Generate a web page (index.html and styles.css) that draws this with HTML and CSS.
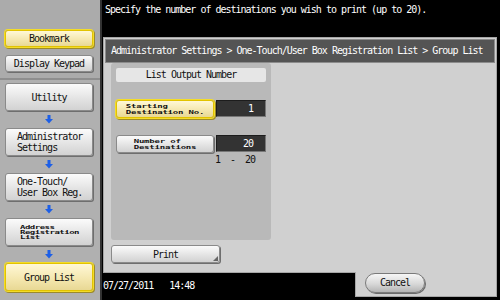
FILE: index.html
```html
<!DOCTYPE html>
<html>
<head>
<meta charset="utf-8">
<link rel="stylesheet" href="styles.css">
</head>
<body>
<aside class="sidebar">
  <div class="side-top">
    <div class="btn btn-yellow side-btn">Bookmark</div>
    <div class="btn side-btn">Display Keypad</div>
  </div>
  <div class="side-flow">
    <div class="btn flow-btn">Utility</div>
    <div class="arrow"><svg width="8" height="9" viewBox="0 0 8 9"><rect x="2.5" y="0" width="3" height="4" fill="#1d5fe6"/><polygon points="0,4 8,4 4,8.5" fill="#1d5fe6"/></svg></div>
    <div class="btn flow-btn flow-left"><span>Administrator<br>Settings</span></div>
    <div class="arrow"><svg width="8" height="9" viewBox="0 0 8 9"><rect x="2.5" y="0" width="3" height="4" fill="#1d5fe6"/><polygon points="0,4 8,4 4,8.5" fill="#1d5fe6"/></svg></div>
    <div class="btn flow-btn flow-left"><span>One-Touch/<br>User Box Reg.</span></div>
    <div class="arrow"><svg width="8" height="9" viewBox="0 0 8 9"><rect x="2.5" y="0" width="3" height="4" fill="#1d5fe6"/><polygon points="0,4 8,4 4,8.5" fill="#1d5fe6"/></svg></div>
    <div class="btn flow-btn flow-left"><span class="tiny">Address<br>Registration<br>List</span></div>
    <div class="arrow"><svg width="8" height="9" viewBox="0 0 8 9"><rect x="2.5" y="0" width="3" height="4" fill="#1d5fe6"/><polygon points="0,4 8,4 4,8.5" fill="#1d5fe6"/></svg></div>
    <div class="btn btn-yellow flow-btn">Group List</div>
  </div>
</aside>
<main class="main">
  <div class="msg">Specify the number of destinations you wish to print (up to 20).</div>
  <section class="panel">
    <div class="panel-head">Administrator Settings &gt; One-Touch/User Box Registration List &gt; Group List</div>
    <div class="panel-body">
      <div class="group">
        <div class="group-title">List Output Number</div>
        <div class="row row-first">
          <div class="btn btn-yellow field-btn"><span class="tiny">Starting<br>Destination No.</span></div>
          <div class="value">1</div>
        </div>
        <div class="row row-second">
          <div class="btn field-btn"><span class="tiny">Number of<br>Destinations</span></div>
          <div class="value">20</div>
        </div>
        <div class="range"><span>1</span><span>-</span><span>20</span></div>
      </div>
      <div class="btn print-btn">Print</div>
    </div>
  </section>
  <div class="footer">
    <div class="clock"><span>07/27/2011</span><span class="time">14:48</span></div>
    <div class="tab"><div class="cancel">Cancel</div></div>
  </div>
</main>
</body>
</html>
```

FILE: styles.css
```css
* { box-sizing: border-box; }
html, body { margin: 0; padding: 0; }
body {
  width: 500px;
  height: 300px;
  overflow: hidden;
  display: flex;
  background: #000;
  font-family: "DejaVu Sans Mono", "Liberation Mono", monospace;
  font-size: 10px;
  letter-spacing: -1px;
  color: #111;
}

.sidebar {
  width: 100px;
  height: 300px;
  display: flex;
  flex-direction: column;
  background: #ababab;
}
.side-top {
  height: 80px;
  padding: 30px 0 0 5px;
  display: flex;
  flex-direction: column;
  gap: 8px;
  border-bottom: 2px solid #8e8e8e;
}
.side-flow {
  flex: 1;
  padding: 3px 0 0 5px;
  display: flex;
  flex-direction: column;
  background: #b0b0b0;
}

.btn {
  display: flex;
  align-items: center;
  justify-content: center;
  background: linear-gradient(#fbfbfb, #e2e2e2 60%, #d2d2d2);
  border: 1px solid #8a8a8a;
  border-radius: 3px;
  box-shadow: 1px 1px 0 #6e6e6e;
  color: #111;
}
.btn-yellow {
  background: linear-gradient(#fff8d6, #f3e6ad 60%, #e8d894);
  border: 1px solid #e2c300;
  box-shadow: 0 0 0 1px #f3dc2a, 1px 1px 0 1px #9c8a2a;
}
.side-btn { width: 88px; height: 17px; }
.flow-btn { width: 88px; height: 28px; line-height: 11px; }
.flow-left { justify-content: flex-start; padding-left: 11px; }
.arrow {
  height: 17px;
  width: 88px;
  display: flex;
  align-items: center;
  justify-content: center;
}
.arrow svg { display: block; }

.tiny {
  font-size: 9px;
  font-weight: bold;
  line-height: 8px;
  letter-spacing: -0.2px;
  display: block;
  transform: scaleY(0.66);
}
.flow-left .tiny { padding-left: 3px; letter-spacing: -0.5px; }

.main {
  flex: 1;
  height: 300px;
  display: flex;
  flex-direction: column;
  border-left: 2px solid #333;
  background: #000;
}
.msg {
  height: 37px;
  padding: 4px 0 0 3px;
  line-height: 11px;
  color: #fff;
}
.panel {
  margin: 0 3px 0 1px;
  padding: 1px 1px 0;
  background: #d0d0d0;
  border: 1px solid #a6a6a6;
  border-bottom: none;
  display: flex;
  flex-direction: column;
}
.panel-head {
  height: 24px;
  background: #545454;
  border: 1px solid #8c8c8c;
  color: #fff;
  padding: 0 0 0 5px;
  line-height: 22px;
}
.panel-body {
  padding: 0 0 9px 6px;
  display: flex;
  flex-direction: column;
  gap: 5px;
}
.group {
  width: 160px;
  height: 177px;
  background: #b9b9b9;
  border-radius: 3px;
  padding: 5px 5px 0;
  display: flex;
  flex-direction: column;
}
.group-title {
  height: 14px;
  background: #e6e6e6;
  border-radius: 2px;
  text-align: center;
  line-height: 14px;
}
.row {
  display: flex;
  gap: 2px;
  height: 18px;
}
.row-first { margin-top: 18px; }
.row-second { margin-top: 17px; }
.field-btn { width: 98px; height: 18px; }
.value {
  width: 50px;
  height: 17px;
  background: #333;
  border: 1px solid #1c1c1c;
  border-right-color: #777;
  border-bottom-color: #777;
  color: #fff;
  text-align: right;
  padding-right: 12px;
  line-height: 15px;
}
.range {
  display: flex;
  justify-content: flex-end;
  gap: 10px;
  padding-right: 11px;
  margin-top: 2px;
  line-height: 10px;
}
.print-btn {
  width: 109px;
  height: 18px;
  position: relative;
}
.print-btn::after {
  content: "";
  position: absolute;
  right: 1px;
  bottom: 1px;
  width: 0;
  height: 0;
  border-left: 5px solid transparent;
  border-bottom: 5px solid #666;
}

.footer {
  flex: 1;
  display: flex;
  margin: 0 3px 0 1px;
}
.clock {
  flex: 1;
  border-top: 1px solid #a6a6a6;
  color: #fff;
  padding: 7px 0 0 0;
  line-height: 11px;
}
.time { margin-left: 16px; }
.tab {
  width: 142px;
  height: 25px;
  background: #d0d0d0;
  border: 1px solid #a6a6a6;
  border-top: none;
  padding: 1px 0 0 9px;
}
.cancel {
  width: 60px;
  height: 20px;
  border-radius: 10px;
  background: linear-gradient(#f6f6f6, #d8d8d8 55%, #b4b4b4);
  border: 1px solid #7a7a7a;
  box-shadow: 1px 1px 0 #6a6a6a;
  text-align: center;
  line-height: 18px;
  color: #111;
}
```
